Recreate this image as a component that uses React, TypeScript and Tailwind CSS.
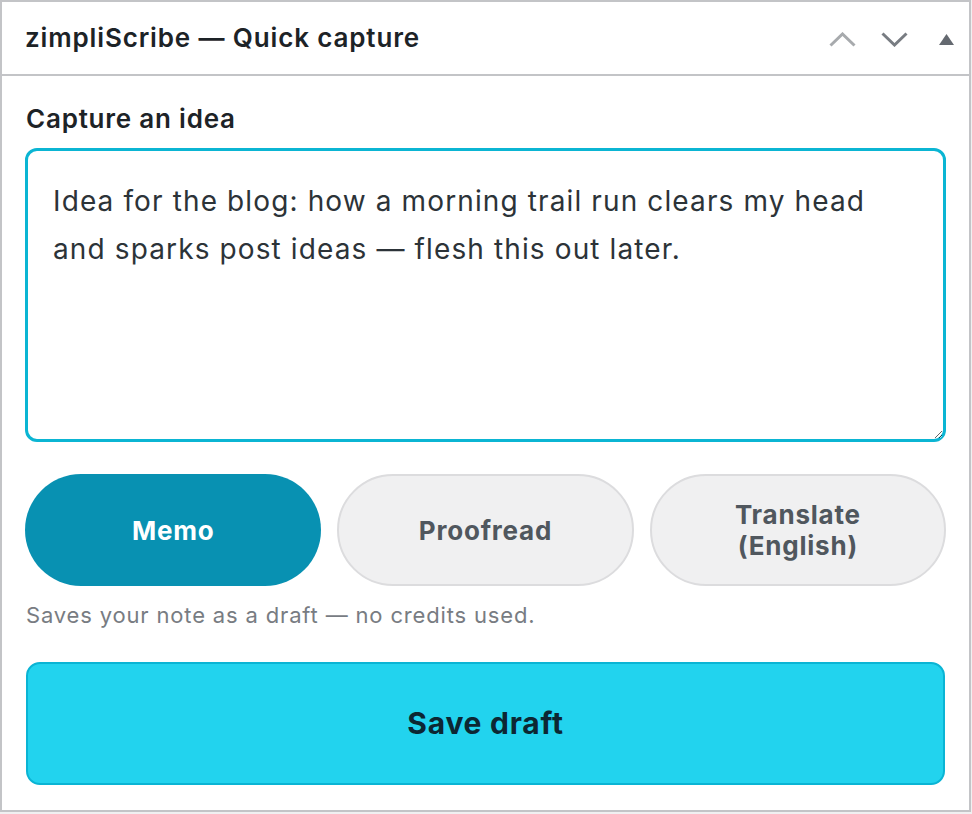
import { useState } from 'react';

const font = { fontFamily: 'Inter, "Noto Sans", sans-serif' };

function ChevronUp({ className }: { className?: string }) {
  return (
    <svg width="27" height="15" viewBox="0 0 27 15" className={className} fill="none">
      <path d="M1.5 13.5 L13.5 2 L25.5 13.5" stroke="currentColor" strokeWidth="3" />
    </svg>
  );
}

function ChevronDown({ className }: { className?: string }) {
  return (
    <svg width="27" height="15" viewBox="0 0 27 15" className={className} fill="none">
      <path d="M1.5 1.5 L13.5 13 L25.5 1.5" stroke="currentColor" strokeWidth="3" />
    </svg>
  );
}

const modes = ['Memo', 'Proofread', 'Translate (English)'];

export default function App() {
  const [mode, setMode] = useState('Memo');
  const [text, setText] = useState(
    'Idea for the blog: how a morning trail run clears my head and sparks post ideas — flesh this out later.'
  );

  return (
    <div className="min-h-screen bg-[#f0f0f1]" style={font}>
      <div className="w-[971px] bg-white border-2 border-[#c3c4c7]">
        {/* Header */}
        <div className="h-[72px] flex items-center justify-between pl-[23px] pr-[15px] border-b-2 border-[#c3c4c7] box-content">
          <h2 className="text-[26px] leading-[34px] font-semibold tracking-[0.033em] text-[#1d2327]">
            zimpliScribe — Quick capture
          </h2>
          <div className="flex items-center pt-[2px]">
            <button type="button" className="text-[#a7aaad]">
              <ChevronUp />
            </button>
            <button type="button" className="ml-[25px] text-[#787c82]">
              <ChevronDown />
            </button>
            <button type="button" className="ml-[31px] text-[#646970]">
              <svg width="15" height="11" viewBox="0 0 15 11">
                <path d="M7.5 0 L15 11 L0 11 Z" fill="currentColor" />
              </svg>
            </button>
          </div>
        </div>

        {/* Body */}
        <div className="px-[23px] pt-[27px] pb-[25px]">
          <label className="block text-[26px] leading-[32px] font-semibold tracking-[0.03em] text-[#1d2327] pl-[1px]">
            Capture an idea
          </label>
          <textarea
            value={text}
            onChange={(e) => setText(e.target.value)}
            className="mt-[13px] block w-full h-[294px] rounded-[12px] border-[3px] border-[#0bb5d3] px-[25px] pt-[26px] text-[28px] leading-[48px] tracking-[0.04em] text-[#2c3338] outline-none"
            style={font}
          />

          <div className="mt-[32px] grid grid-cols-3 gap-4">
            {modes.map((m) => (
              <button
                key={m}
                type="button"
                onClick={() => setMode(m)}
                className={
                  mode === m
                    ? 'h-[112px] rounded-full bg-[#0891b2] text-white text-[26px] leading-[31px] font-bold tracking-[0.03em] px-6'
                    : 'h-[112px] rounded-full bg-[#f0f0f1] border-2 border-[#dcdcde] text-[#50575e] text-[26px] leading-[31px] font-bold tracking-[0.03em] px-6'
                }
              >
                {m === 'Translate (English)' ? (
                  <>
                    Translate
                    <br />
                    (English)
                  </>
                ) : (
                  m
                )}
              </button>
            ))}
          </div>

          <p className="mt-[15px] pl-[1px] text-[22px] leading-[28px] tracking-[0.038em] text-[#787c82]">
            Saves your note as a draft — no credits used.
          </p>

          <button
            type="button"
            className="mt-[33px] mx-[1px] w-[919px] h-[123px] rounded-[14px] bg-[#22d3ee] border-2 border-[#0ab4d4] text-[30px] font-bold tracking-[0.025em] text-[#0c2733]"
          >
            Save draft
          </button>
        </div>
      </div>
    </div>
  );
}
